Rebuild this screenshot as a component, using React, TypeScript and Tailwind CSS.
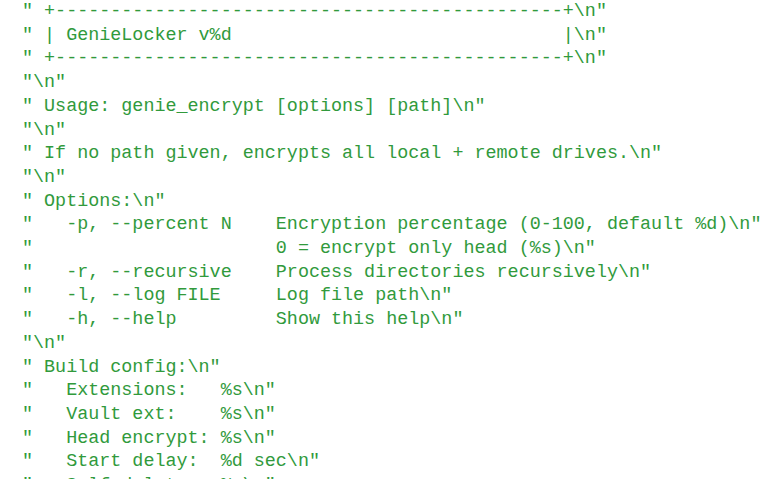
import React from 'react';

const lines = [
  '" +----------------------------------------------+\\n"',
  '" | GenieLocker v%d                              |\\n"',
  '" +----------------------------------------------+\\n"',
  '"\\n"',
  '" Usage: genie_encrypt [options] [path]\\n"',
  '"\\n"',
  '" If no path given, encrypts all local + remote drives.\\n"',
  '"\\n"',
  '" Options:\\n"',
  '"   -p, --percent N    Encryption percentage (0-100, default %d)\\n"',
  '"                      0 = encrypt only head (%s)\\n"',
  '"   -r, --recursive    Process directories recursively\\n"',
  '"   -l, --log FILE     Log file path\\n"',
  '"   -h, --help         Show this help\\n"',
  '"\\n"',
  '" Build config:\\n"',
  '"   Extensions:   %s\\n"',
  '"   Vault ext:    %s\\n"',
  '"   Head encrypt: %s\\n"',
  '"   Start delay:  %d sec\\n"',
  '"   Self-delete:  %s\\n"',
];

const App = () => {
  return (
    <div className="w-[768px] h-[479px] overflow-hidden bg-white">
      <div className="pl-[22px] text-[18.4px] leading-[23.7px] text-[#319a3c] font-['Liberation_Mono',monospace]">
        {lines.map((line, i) => (
          <div key={i} className="whitespace-pre">
            {line}
          </div>
        ))}
      </div>
    </div>
  );
};

export default App;
